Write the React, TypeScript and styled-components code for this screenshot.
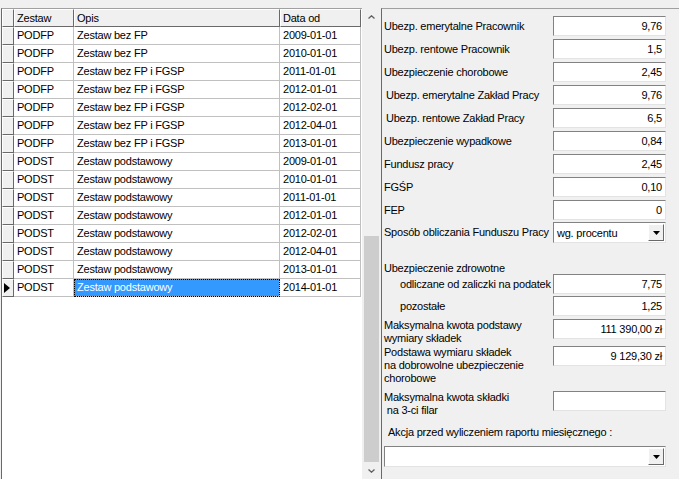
import React from "react";
import styled, { createGlobalStyle } from "styled-components";

const GlobalStyle = createGlobalStyle`
  html, body {
    margin: 0;
    padding: 0;
    background: #f0f0f0;
  }
  body {
    font-family: "Liberation Sans", Arial, sans-serif;
    font-size: 11px;
    letter-spacing: -0.22px;
    color: #000;
  }
`;

const Window = styled.div`
  width: 679px;
  height: 479px;
  overflow: hidden;
  background: #f0f0f0;
  padding-top: 8px;
  box-sizing: border-box;
  display: flex;
`;

const GridPane = styled.div`
  width: 361px;
  margin-left: 1px;
  background: #fff;
  border-left: 1px solid #696969;
  border-top: 1px solid #a0a0a0;
  box-sizing: border-box;
`;

const Table = styled.div`
  display: grid;
  grid-template-columns: 12px 60px 206px 81px;
  grid-auto-rows: 18px;
`;

const HeadCell = styled.div`
  background: #f0f0f0;
  border-top: 1px solid #fff;
  border-left: 1px solid #fff;
  border-right: 1px solid #696969;
  border-bottom: 1px solid #696969;
  box-sizing: border-box;
  padding-left: 2px;
  line-height: 16px;
  white-space: nowrap;
`;

const Indicator = styled(HeadCell)`
  padding-left: 1px;
  display: flex;
  align-items: center;
`;

const Cell = styled.div<{ $selected?: boolean }>`
  border-right: 1px solid #c0c0c0;
  border-bottom: 1px solid #c0c0c0;
  box-sizing: border-box;
  padding-left: 3px;
  line-height: 17px;
  white-space: nowrap;
  overflow: hidden;
  background: ${(p) => (p.$selected ? "#3399ff" : "#fff")};
  color: ${(p) => (p.$selected ? "#fff" : "#000")};
  outline: ${(p) => (p.$selected ? "1px dotted #000" : "none")};
  outline-offset: -1px;
`;

const ScrollBar = styled.div`
  width: 19px;
  display: flex;
  flex-direction: column;
  align-items: center;
  background: #f0f0f0;
`;

const ScrollArrow = styled.div`
  height: 17px;
  width: 100%;
  display: flex;
  align-items: center;
  justify-content: center;
`;

const ScrollTrack = styled.div`
  flex: 1;
  width: 100%;
  display: flex;
  flex-direction: column;
  padding: 0 2px;
  box-sizing: border-box;
`;

const ScrollThumb = styled.div`
  margin-top: auto;
  height: 226px;
  background: #cdcdcd;
`;

const FormPane = styled.div`
  flex: 1;
  border-left: 1px solid #696969;
  border-top: 1px solid #a0a0a0;
  padding: 7px 0 0 2px;
  box-sizing: border-box;
  display: flex;
  flex-direction: column;
`;

const FieldRow = styled.div<{ $h: number }>`
  height: ${(p) => p.$h}px;
  display: flex;
  align-items: flex-start;
  flex-shrink: 0;
`;

const Label = styled.div<{ $indent?: number; $single?: boolean }>`
  width: 169px;
  padding-left: ${(p) => p.$indent ?? 0}px;
  padding-top: ${(p) => (p.$single ? 4 : 0)}px;
  box-sizing: border-box;
  line-height: 13px;
  white-space: pre;
`;

const Caption = styled.div<{ $indent?: number; $h: number }>`
  height: ${(p) => p.$h}px;
  padding-left: ${(p) => p.$indent ?? 0}px;
  line-height: 13px;
  flex-shrink: 0;
  white-space: pre;
`;

const Input = styled.div`
  width: 113px;
  height: 20px;
  background: #fff;
  border-top: 1px solid #828282;
  border-left: 1px solid #828282;
  border-right: 1px solid #e3e3e3;
  border-bottom: 1px solid #e3e3e3;
  box-sizing: border-box;
  text-align: right;
  padding-right: 3px;
  line-height: 18px;
  white-space: nowrap;
`;

const Select = styled(Input)<{ $w: number }>`
  width: ${(p) => p.$w}px;
  height: 21px;
  display: flex;
  align-items: center;
  text-align: left;
  padding: 0 1px 0 3px;
`;

const SelectText = styled.div`
  flex: 1;
`;

const DropButton = styled.div`
  width: 16px;
  height: 17px;
  background: #f0f0f0;
  border-top: 1px solid #fff;
  border-left: 1px solid #fff;
  border-right: 1px solid #696969;
  border-bottom: 1px solid #696969;
  box-sizing: border-box;
  display: flex;
  align-items: center;
  justify-content: center;
`;

const Arrow = () => (
  <svg width="7" height="4" viewBox="0 0 7 4">
    <path d="M0 0h7L3.5 4z" fill="#000" />
  </svg>
);

const rows = [
  ["PODFP", "Zestaw bez FP", "2009-01-01"],
  ["PODFP", "Zestaw bez FP", "2010-01-01"],
  ["PODFP", "Zestaw bez FP i FGSP", "2011-01-01"],
  ["PODFP", "Zestaw bez FP i FGSP", "2012-01-01"],
  ["PODFP", "Zestaw bez FP i FGSP", "2012-02-01"],
  ["PODFP", "Zestaw bez FP i FGSP", "2012-04-01"],
  ["PODFP", "Zestaw bez FP i FGSP", "2013-01-01"],
  ["PODST", "Zestaw podstawowy", "2009-01-01"],
  ["PODST", "Zestaw podstawowy", "2010-01-01"],
  ["PODST", "Zestaw podstawowy", "2011-01-01"],
  ["PODST", "Zestaw podstawowy", "2012-01-01"],
  ["PODST", "Zestaw podstawowy", "2012-02-01"],
  ["PODST", "Zestaw podstawowy", "2012-04-01"],
  ["PODST", "Zestaw podstawowy", "2013-01-01"],
  ["PODST", "Zestaw podstawowy", "2014-01-01"],
];

const rates: [string, string, number, number?][] = [
  ["Ubezp. emerytalne Pracownik", "9,76", 23],
  ["Ubezp. rentowe Pracownik", "1,5", 23],
  ["Ubezpieczenie chorobowe", "2,45", 23],
  ["Ubezp. emerytalne Zakład Pracy", "9,76", 23, 2],
  ["Ubezp. rentowe Zakład Pracy", "6,5", 23, 2],
  ["Ubezpieczenie wypadkowe", "0,84", 23],
  ["Fundusz pracy", "2,45", 23],
  ["FGŚP", "0,10", 23],
  ["FEP", "0", 22],
];

export default function App() {
  const last = rows.length - 1;
  return (
    <>
      <GlobalStyle />
      <Window>
        <GridPane>
          <Table>
            <HeadCell />
            <HeadCell>Zestaw</HeadCell>
            <HeadCell>Opis</HeadCell>
            <HeadCell>Data od</HeadCell>
            {rows.map((r, i) => (
              <React.Fragment key={i}>
                <Indicator>
                  {i === last && (
                    <svg width="6" height="10" viewBox="0 0 6 10">
                      <path d="M0 0l6 5-6 5z" fill="#000" />
                    </svg>
                  )}
                </Indicator>
                <Cell>{r[0]}</Cell>
                <Cell $selected={i === last}>{r[1]}</Cell>
                <Cell>{r[2]}</Cell>
              </React.Fragment>
            ))}
          </Table>
        </GridPane>
        <ScrollBar>
          <ScrollArrow>
            <svg width="7" height="4" viewBox="0 0 7 4">
              <path d="M0.5 3.5L3.5 0.8 6.5 3.5" stroke="#606060" strokeWidth="1.3" fill="none" />
            </svg>
          </ScrollArrow>
          <ScrollTrack>
            <ScrollThumb />
          </ScrollTrack>
          <ScrollArrow>
            <svg width="7" height="4" viewBox="0 0 7 4">
              <path d="M0.5 0.5L3.5 3.2 6.5 0.5" stroke="#606060" strokeWidth="1.3" fill="none" />
            </svg>
          </ScrollArrow>
        </ScrollBar>
        <FormPane>
          {rates.map(([label, value, h, indent]) => (
            <FieldRow key={label} $h={h}>
              <Label $single $indent={indent}>{label}</Label>
              <Input>{value}</Input>
            </FieldRow>
          ))}
          <FieldRow $h={40}>
            <Label $single>Sposób obliczania Funduszu Pracy</Label>
            <Select $w={113}>
              <SelectText>wg. procentu</SelectText>
              <DropButton>
                <Arrow />
              </DropButton>
            </Select>
          </FieldRow>
          <Caption $h={12}>Ubezpieczenie zdrowotne</Caption>
          <FieldRow $h={22}>
            <Label $single $indent={16}>odliczane od zaliczki na podatek</Label>
            <Input>7,75</Input>
          </FieldRow>
          <FieldRow $h={23}>
            <Label $single $indent={16}>pozostałe</Label>
            <Input>1,25</Input>
          </FieldRow>
          <FieldRow $h={27}>
            <Label>{"Maksymalna kwota podstawy\nwymiary składek"}</Label>
            <Input>111 390,00 zł</Input>
          </FieldRow>
          <FieldRow $h={45}>
            <Label>{"Podstawa wymiaru składek\nna dobrowolne ubezpieczenie\nchorobowe"}</Label>
            <Input>9 129,30 zł</Input>
          </FieldRow>
          <FieldRow $h={35}>
            <Label>{"Maksymalna kwota składki\n na 3-ci filar"}</Label>
            <Input />
          </FieldRow>
          <Caption $h={20} $indent={4}>Akcja przed wyliczeniem raportu miesięcznego :</Caption>
          <Select $w={282}>
            <SelectText />
            <DropButton>
              <Arrow />
            </DropButton>
          </Select>
        </FormPane>
      </Window>
    </>
  );
}
